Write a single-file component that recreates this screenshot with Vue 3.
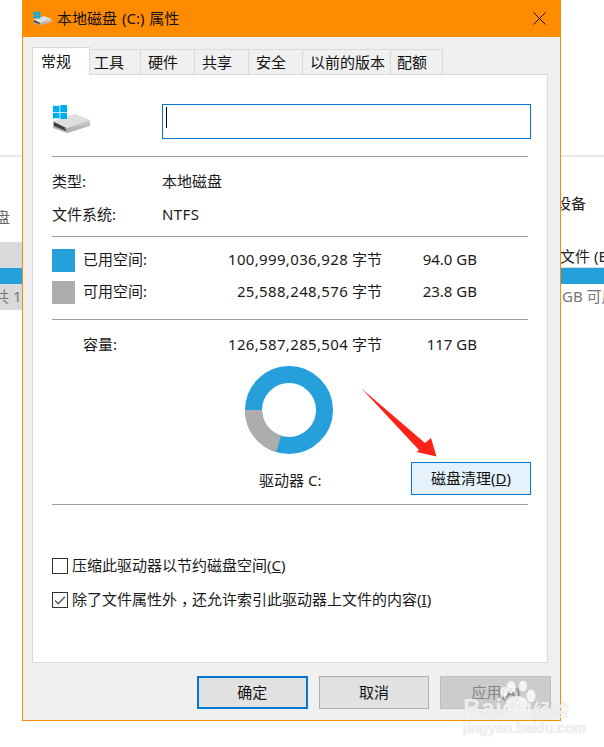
<script setup>
const tabs = [
  { label: '常规', width: 58, pad: 8, active: true },
  { label: '工具', width: 51, pad: 4 },
  { label: '硬件', width: 54, pad: 7 },
  { label: '共享', width: 54, pad: 7 },
  { label: '安全', width: 54, pad: 7 },
  { label: '以前的版本', width: 88, pad: 7 },
  { label: '配额', width: 52, pad: 6 }
]
</script>

<template>
  <div class="desk">
    <div class="side side-left">
      <div class="rule"></div>
      <div class="bg-text left-disk">盘</div>
      <div class="grey-block">
        <div class="blue-bar"></div>
        <div class="bg-text muted left-count">共 1</div>
      </div>
    </div>
    <div class="side side-right">
      <div class="rule"></div>
      <div class="bg-text right-device">设备</div>
      <div class="bg-text right-file">文件 (E:)</div>
      <div class="blue-bar right-bar"></div>
      <div class="bg-text muted right-free">GB 可用</div>
    </div>

    <section class="dialog">
      <header class="titlebar">
        <svg class="title-icon" viewBox="53 103 39 30" aria-hidden="true">
          <use href="#drive-shape" />
        </svg>
        <span class="title-text">本地磁盘 (C:) 属性</span>
        <svg class="close" viewBox="0 0 13 13" aria-hidden="true">
          <path d="M.5.5l12 12M12.500.5l-12 12" fill="none" stroke="#111" stroke-width="1" />
        </svg>
      </header>

      <nav class="tabs">
        <div
          v-for="tab in tabs"
          :key="tab.label"
          class="tab"
          :class="{ active: tab.active }"
          :style="{ width: tab.width + 'px', paddingLeft: tab.pad + 'px' }"
        >{{ tab.label }}</div>
      </nav>

      <main class="panel">
        <div class="head-row">
          <svg class="drive" viewBox="53 103 39 30" aria-hidden="true">
            <defs>
              <linearGradient id="side-grad" x1="0" y1="0" x2="0" y2="1">
                <stop offset="0" stop-color="#cfcfcf" />
                <stop offset="1" stop-color="#a9a9a9" />
              </linearGradient>
              <g id="drive-shape">
                <polygon points="54,120 76,113 91,119 68,127" fill="#dedede" />
                <polygon points="68,127 91,119 91,125 68,132" fill="url(#side-grad)" />
                <polygon points="54,120 68,127 68,132 54,127" fill="#b0b0b0" />
                <polygon points="55,121 67,127 67,130 55,125" fill="#3c3f3d" />
                <rect x="65.500" y="126.500" width="1.500" height="1.500" fill="#3fd06a" />
                <rect x="54" y="104.800" width="6.500" height="6.300" fill="#00adef" />
                <rect x="61.300" y="104" width="6.700" height="7.100" fill="#00adef" />
                <rect x="54" y="111.800" width="6.500" height="5.500" fill="#00adef" />
                <rect x="61.300" y="111.800" width="6.700" height="6.200" fill="#00adef" />
              </g>
            </defs>
            <use href="#drive-shape" />
          </svg>
          <div class="name-input"><span class="caret"></span></div>
        </div>

        <div class="rule-line first"></div>

        <div class="info-row first-info"><span>类型:</span><span>本地磁盘</span></div>
        <div class="info-row second-info"><span>文件系统:</span><span class="latin">NTFS</span></div>

        <div class="rule-line"></div>

        <div class="space-row used-row space-first">
          <span class="swatch used"></span><span>已用空间:</span>
          <span class="num"><span class="digits">100,999,036,928</span> 字节</span><span class="num">94.0 GB</span>
        </div>
        <div class="space-row used-row space-second">
          <span class="swatch free"></span><span>可用空间:</span>
          <span class="num"><span class="digits">25,588,248,576</span> 字节</span><span class="num">23.8 GB</span>
        </div>

        <div class="rule-line rule-cap"></div>

        <div class="space-row capacity">
          <span></span><span>容量:</span>
          <span class="num"><span class="digits">126,587,285,504</span> 字节</span><span class="num">117 GB</span>
        </div>

        <svg class="donut" viewBox="0 0 88 88" aria-hidden="true">
          <circle cx="44" cy="44" r="35.500" fill="none" stroke="#26a0da" stroke-width="17" />
          <path d="M0 44 A44 44 0 0 0 31.100 86.100 L36.100 69.800 A27 27 0 0 1 17 44 Z" fill="#adadad" />
        </svg>

        <div class="drive-row">
          <span class="drive-label">驱动器 C:</span>
          <button class="clean">磁盘清理(<u>D</u>)</button>
        </div>

        <div class="rule-line rule-drive"></div>

        <label class="check check-first">
          <span class="box"></span>
          <span class="check-text">压缩此驱动器以节约磁盘空间(<u>C</u>)</span>
        </label>
        <label class="check check-second">
          <span class="box">
            <svg viewBox="0 0 14 14" aria-hidden="true">
              <path d="M2 7.500l3.200 3.200L12 3.700" fill="none" stroke="#555" stroke-width="1.300" />
            </svg>
          </span>
          <span class="check-text">除了文件属性外<span class="comma">，</span>还允许索引此驱动器上文件的内容(<u>I</u>)</span>
        </label>
      </main>

      <footer class="actions">
        <button class="btn primary">确定</button>
        <button class="btn">取消</button>
        <button class="btn disabled">应用(A)</button>
      </footer>
    </section>

    <svg class="arrow" viewBox="0 0 80 75" aria-hidden="true">
      <polygon points="0.500,0.500 64,55 70,50 75.500,68.500 55.500,64 58,62" fill="#fb2318" />
    </svg>

    <div class="watermark" aria-hidden="true">
      <svg class="paw" viewBox="0 0 40 34">
        <ellipse cx="7" cy="11" rx="3.500" ry="5" />
        <ellipse cx="14" cy="6" rx="4.500" ry="6" />
        <ellipse cx="26" cy="5" rx="4" ry="5.500" />
        <ellipse cx="34" cy="15" rx="4.500" ry="6.500" />
        <ellipse cx="20" cy="23" rx="11" ry="8" />
      </svg>
      <div class="wm-main"><span class="wm-bai">Baidu</span><span class="wm-cn">经验</span></div>
      <div class="wm-url">jingyan.baidu.com</div>
    </div>
  </div>
</template>

<style>
html, body { margin: 0; background: #fff; }
</style>

<style scoped>
.desk {
  position: relative;
  width: 604px;
  height: 747px;
  overflow: hidden;
  background: #fff;
  display: flex;
  justify-content: space-between;
  font: 15px/24px "Noto Sans", "Noto Sans CJK SC", sans-serif;
  color: #1a1a1a;
}
.side { padding-top: 155px; overflow: hidden; white-space: nowrap; }
.side-left { width: 22px; }
.side-right { width: 43px; }
.rule { height: 2px; background: #e8e8e8; }
.bg-text { height: 24px; color: #222; }
.muted { color: #777; }
.left-disk { margin: 48px 0 0 -5px; color: #666; }
.grey-block { margin-top: 13px; height: 68px; background: #d9d9d9; padding-top: 26px; box-sizing: border-box; }
.blue-bar { height: 16px; background: #26a0da; }
.left-count { margin: 0 0 0 -6px; color: #777; }
.right-device { margin: 34px 0 0 -5px; }
.right-file { margin: 29px 0 0 -1px; }
.right-bar { margin-top: -1px; border-top: 1px solid #cfe3ee; }
.right-free { margin: 0 0 0 1px; }

.dialog {
  position: absolute;
  left: 22px;
  top: 0;
  width: 539px;
  height: 721px;
  box-sizing: border-box;
  border: 1px solid #ff8c00;
  border-top: 0;
  background: #f0f0f0;
  display: flex;
  flex-direction: column;
}
.titlebar {
  height: 37px;
  flex: none;
  margin: 0 -1px;
  background: #ff8c00;
  display: flex;
  align-items: center;
  padding: 0 15px 0 11px;
}
.title-icon { width: 19px; height: 15px; margin-right: 5px; }
.title-text { font-size: 15px; line-height: 23px; padding-bottom: 1px; color: #111; flex: 1; word-spacing: 1px; }
.close { width: 13px; height: 13px; }

.tabs { display: flex; align-items: flex-end; height: 37px; margin-left: 9px; flex: none; position: relative; z-index: 1; }
.tab {
  box-sizing: border-box;
  height: 25px;
  border: 1px solid #d9d9d9;
  border-left-width: 0;
  border-bottom: 0;
  color: #111;
  line-height: 24px;
}
.tab.active {
  height: 28px;
  margin-bottom: -1px;
  border-left-width: 1px;
  background: #fff;
  line-height: 26px;
}
.panel {
  box-sizing: border-box;
  width: 516px;
  height: 589px;
  margin-left: 9px;
  flex: none;
  border: 1px solid #d9d9d9;
  background: #fff;
  padding: 29px 16px 0 19px;
}
.head-row { display: flex; align-items: flex-start; height: 35px; }
.drive { width: 39px; height: 30px; margin-right: 71px; }
.name-input {
  flex: 1;
  box-sizing: border-box;
  height: 35px;
  border: 1px solid #0078d7;
  padding: 2px 3px;
}
.caret { display: block; width: 1px; height: 21px; background: #000; }
.rule-line { height: 1px; width: 476px; background: #a0a0a0; margin-top: 10px; }
.rule-line.first { margin-top: 17px; }
.rule-cap { margin-top: 15px; }
.rule-drive { margin-top: 9px; }
.info-row { display: grid; grid-template-columns: 110px 1fr; height: 24px; align-items: center; }
.first-info { margin-top: 12px; }
.second-info { margin-top: 9px; }
.latin { font-family: "Noto Sans", sans-serif; letter-spacing: .4px; }
.space-row {
  display: grid;
  grid-template-columns: 31px 80px 219px 95px;
  height: 23px;
  align-items: center;
}
.used-row { align-items: start; line-height: 21px; }
.space-first { margin-top: 12px; }
.space-second { margin-top: 9px; }
.capacity { margin-top: 12px; height: 24px; }
.swatch { width: 23px; height: 23px; display: block; }
.swatch.used { background: #26a0da; }
.swatch.free { background: #adadad; }
.num { text-align: right; }
.digits { letter-spacing: .34px; }
.donut { display: block; width: 88px; height: 88px; margin: 10px 0 0 193px; }
.drive-row { display: flex; justify-content: space-between; align-items: flex-end; margin-top: 8px; height: 33px; }
.drive-label { margin-left: 207px; line-height: 30px; }
.clean {
  width: 120px;
  height: 33px;
  box-sizing: border-box;
  border: 1px solid #0078d7;
  background: #e5f1fb;
  font: inherit;
  color: #111;
  padding: 0 0 2px;
}
.check { display: flex; align-items: center; gap: 4px; height: 24px; }
.check-first { margin-top: 49px; }
.check-second { margin-top: 10px; }
.check-text { padding-bottom: 2px; }
.comma { display: inline-block; width: 15px; box-sizing: border-box; padding-left: 4px; }
.box {
  box-sizing: border-box;
  width: 16px;
  height: 16px;
  border: 1px solid #333;
  background: #fff;
  display: block;
  flex: none;
}
.box svg { display: block; width: 14px; height: 14px; }
.actions {
  display: flex;
  gap: 11px;
  padding: 13px 0 0 174px;
}
.btn {
  width: 110.700px;
  height: 33px;
  box-sizing: border-box;
  border: 1px solid #adadad;
  background: #e1e1e1;
  font: inherit;
  color: #111;
  padding: 0 0 2px;
}
.btn.primary { border: 2px solid #0078d7; }
.btn.disabled { background: #cccccc; border-color: #bfbfbf; color: #838383; }

.arrow { position: absolute; left: 361px; top: 388px; width: 80px; height: 75px; }

.watermark { position: absolute; left: 463px; top: 681px; width: 112px; height: 56px; }
.paw { position: absolute; left: 34px; top: 0; width: 40px; height: 34px; fill: rgba(255, 255, 255, .78); }
.wm-main {
  position: absolute;
  left: 0;
  top: 12px;
  display: flex;
  align-items: baseline;
  white-space: nowrap;
  color: rgba(248, 248, 248, .85);
  text-shadow: 0 0 1px rgba(150, 150, 150, .4);
}
.wm-bai { font: 700 25px/30px "Liberation Sans", sans-serif; width: 70px; }
.wm-cn { font: 700 18px/24px "Noto Sans CJK SC", sans-serif; }
.wm-url {
  position: absolute;
  left: 0;
  top: 39px;
  white-space: nowrap;
  font: 700 14px/16px "Liberation Sans", sans-serif;
  color: rgba(244, 244, 244, .9);
  text-shadow: 0 0 1px rgba(150, 150, 150, .4);
}
</style>
